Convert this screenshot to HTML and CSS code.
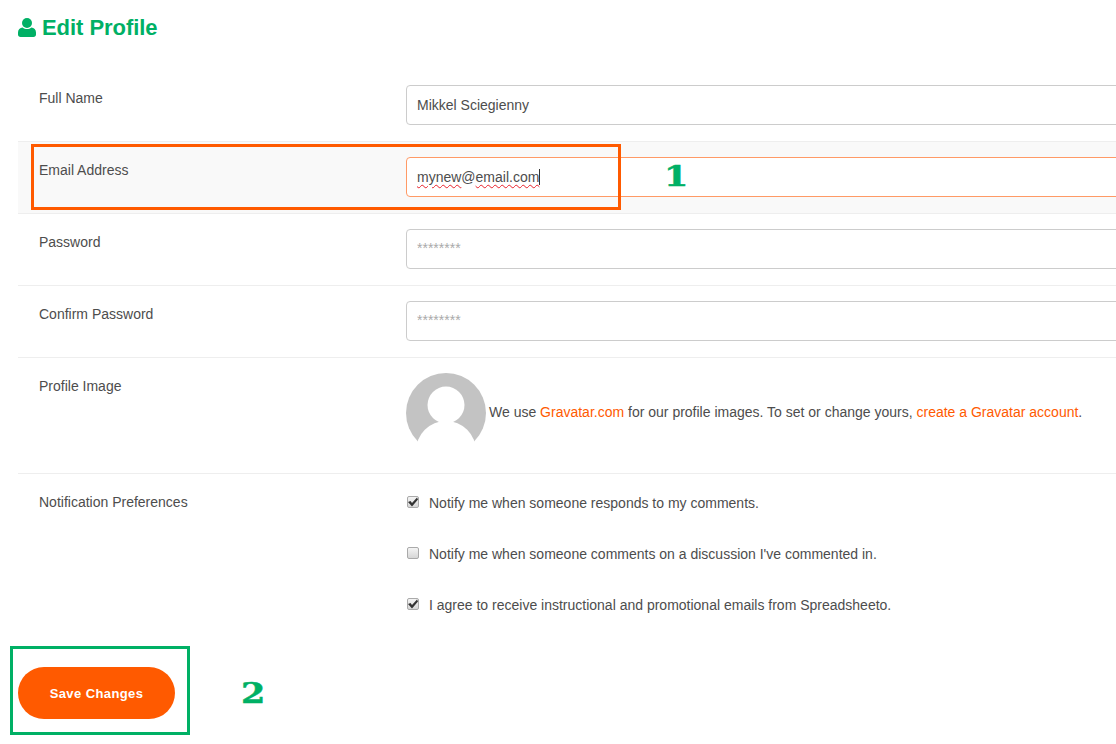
FILE: index.html
```html
<!DOCTYPE html>
<html lang="en">
<head>
<meta charset="utf-8">
<title>Edit Profile</title>
<link rel="stylesheet" href="styles.css">
</head>
<body>
<main class="page">
  <h1 class="title">
    <svg class="title-icon" viewBox="0 0 18 19" aria-hidden="true"><circle cx="9" cy="5" r="5"/><path d="M4.6 9.400C6 10.600 7.400 11 9 11s3-.4 4.400-1.600C16 9.600 18 11.400 18 14.600v1.900C18 18 17 19 15.500 19h-13C1 19 0 18 0 16.500v-1.900C0 11.400 2 9.600 4.600 9.400z"/></svg>
    Edit Profile
  </h1>
  <form class="form">
    <div class="row">
      <label class="label">Full Name</label>
      <div class="field"><input class="input" type="text" value="Mikkel Sciegienny"></div>
    </div>
    <div class="row row-active">
      <label class="label">Email Address</label>
      <div class="field"><div class="input input-focus"><span class="typo">mynew</span>@<span class="typo">email.com</span><span class="caret"></span></div></div>
    </div>
    <div class="row">
      <label class="label">Password</label>
      <div class="field"><input class="input input-secret" type="password" placeholder="********"></div>
    </div>
    <div class="row">
      <label class="label">Confirm Password</label>
      <div class="field"><input class="input input-secret" type="password" placeholder="********"></div>
    </div>
    <div class="row row-image">
      <label class="label">Profile Image</label>
      <div class="field gravatar">
        <svg class="avatar" viewBox="0 0 80 80" aria-hidden="true"><circle cx="40" cy="40" r="40" fill="#c3c3c3"/><circle cx="40" cy="32" r="18.500" fill="#fff"/><circle cx="40" cy="78" r="30" fill="#fff"/></svg>
        <p class="gravatar-text">We use <a href="#">Gravatar.com</a> for our profile images. To set or change yours, <a href="#">create a Gravatar account</a>.</p>
      </div>
    </div>
    <div class="row row-last">
      <label class="label">Notification Preferences</label>
      <div class="field checks">
        <label class="check"><input type="checkbox" checked>Notify me when someone responds to my comments.</label>
        <label class="check"><input type="checkbox">Notify me when someone comments on a discussion I've commented in.</label>
        <label class="check"><input type="checkbox" checked>I agree to receive instructional and promotional emails from Spreadsheeto.</label>
      </div>
    </div>
    <button class="save" type="button">Save Changes</button>
  </form>
</main>
<div class="mark mark-email"></div>
<div class="mark mark-save"></div>
<div class="step step-one">1</div>
<div class="step step-two">2</div>
</body>
</html>
```
FILE: styles.css
```css
* { box-sizing: border-box; }
html, body { margin: 0; height: 100%; overflow: hidden; background: #fff; }
body { font-family: "Liberation Sans", Arial, sans-serif; font-size: 14px; color: #4d4d4d; }
.page { padding: 0 0 0 18px; width: 1300px; }
.title { display: flex; align-items: center; gap: 6px; margin: 0; height: 70px; padding-bottom: 15px; font-size: 22px; font-weight: 700; color: #00b065; letter-spacing: -.05px; }
.title-icon { width: 18px; height: 19px; fill: #00b065; flex: none; }
.row { display: grid; grid-template-columns: 388px 1fr; padding: 15px 0 16px; border-bottom: 1px solid #eee; }
.row-active { background: #f9f9f9; }
.row-image { padding-bottom: 20px; }
.row-last { border-bottom: 0; padding-bottom: 0; }
.label { padding: 5px 0 0 21px; line-height: 16px; }
.input { display: block; width: 100%; height: 40px; padding: 0 10px; border: 1px solid #ccc; border-radius: 4px; background: #fff; font: 14px/38px "Liberation Sans", Arial, sans-serif; color: #4d4d4d; outline: 0; }
.input-secret { padding-bottom: 2px; }
.input::placeholder { color: #aaa; opacity: 1; }
.input-focus { border-color: #ff9a66; }
.typo { text-decoration: underline wavy #e8202a 1px; text-underline-offset: 2px; }
.caret { display: inline-block; width: 1px; height: 16px; background: #333; vertical-align: -3px; }
.gravatar { display: flex; align-items: center; gap: 3px; }
.avatar { width: 80px; height: 80px; flex: none; }
.gravatar-text { margin: 0 0 2px; }
.gravatar-text a { color: #ff5a00; text-decoration: none; }
.checks { display: flex; flex-direction: column; gap: 35px; padding-top: 6px; }
.check { display: flex; align-items: center; height: 16px; }
.check input { appearance: none; -webkit-appearance: none; position: relative; width: 12px; height: 12px; margin: 0 10px 2px 1px; flex: none; border: 1px solid #aaa; border-radius: 2px; background: linear-gradient(#f4f4f4, #d6d6d6); }
.check input:checked::after { content: ""; position: absolute; left: 0; top: 0; width: 10px; height: 10px; background: #333; clip-path: polygon(0 50%, 25% 40%, 40% 60%, 90% 5%, 100% 25%, 40% 95%); }
.save { display: block; width: 157px; height: 52px; margin-top: 54px; padding: 0; border: 0; border-radius: 26px; background: #ff5a00; color: #fff; font: 700 13px "Liberation Sans", Arial, sans-serif; letter-spacing: .4px; }
.mark { position: absolute; border-style: solid; border-width: 3px; }
.mark-email { left: 31px; top: 144px; width: 590px; height: 66px; border-color: #ff5a00; }
.mark-save { left: 10px; top: 646px; width: 180px; height: 89px; border-color: #00b065; }
.step { position: absolute; font-family: "DejaVu Serif", serif; font-weight: 700; font-size: 28px; line-height: 30px; color: #00b065; transform: scaleX(1.25); transform-origin: left center; -webkit-text-stroke: .5px #00b065; }
.step-one { left: 664px; top: 162px; }
.step-two { left: 241px; top: 679px; }
```
